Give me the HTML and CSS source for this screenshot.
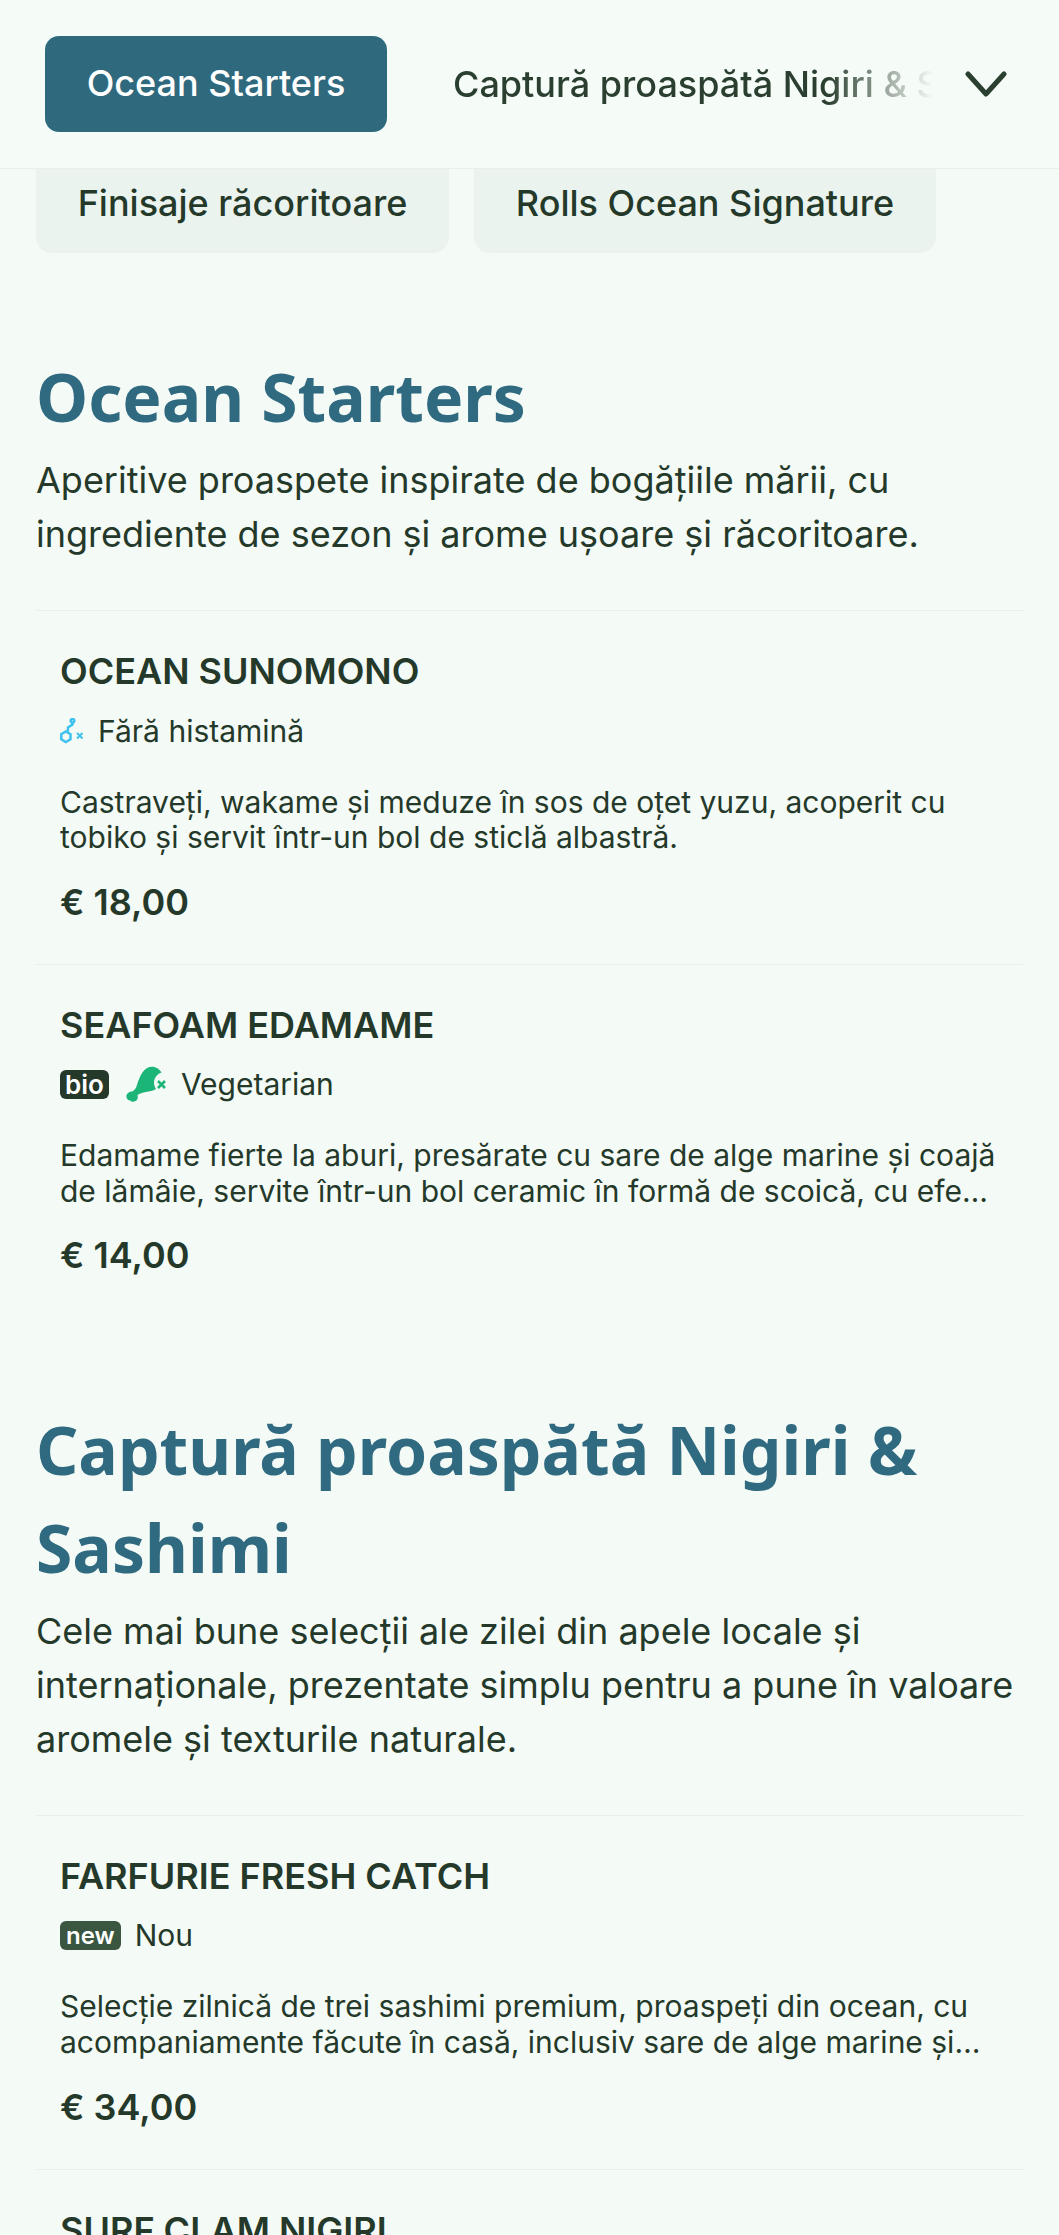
FILE: index.html
```html
<!DOCTYPE html>
<html lang="ro">
<head>
<meta charset="utf-8">
<title>Meniu</title>
<link rel="stylesheet" href="styles.css">
</head>
<body>
<header class="topbar">
  <a class="tab tab-active">Ocean Starters</a>
  <div class="tab-scroll"><a class="tab">Captură proaspătă Nigiri &amp; Sashimi</a></div>
  <svg class="chevron" viewBox="0 0 42 26" aria-hidden="true"><path d="M3 3 L21 23 L39 3" fill="none" stroke="#2b3f30" stroke-width="5" stroke-linecap="round" stroke-linejoin="round"/></svg>
</header>
<nav class="more-tabs">
  <a class="chip">Finisaje răcoritoare</a>
  <a class="chip">Rolls Ocean Signature</a>
</nav>
<main>
  <section class="category">
    <h2>Ocean Starters</h2>
    <p class="lead">Aperitive proaspete inspirate de bogățiile mării, cu ingrediente de sezon și arome ușoare și răcoritoare.</p>
    <article class="item">
      <h3>OCEAN SUNOMONO</h3>
      <div class="tags">
        <svg class="ico-hist" viewBox="0 0 24 26" aria-hidden="true"><g fill="none" stroke="#3fc2ee" stroke-width="2.500"><path d="M5.800 13.500 L10.500 16.200 V21.300 L5.800 24 L1.300 21.300 V16.200 Z"/><path d="M7.800 14 L8 9.500 L12.500 6.500 L12.500 4.800"/><circle cx="12.500" cy="2.800" r="1.800"/></g><path d="M17 15 L22.500 20.500 M22.500 15 L17 20.500" stroke="#3fc2ee" stroke-width="2" fill="none"/></svg>
        <span>Fără histamină</span>
      </div>
      <p class="desc">Castraveți, wakame și meduze în sos de oțet yuzu, acoperit cu tobiko și servit într-un bol de sticlă albastră.</p>
      <div class="price">€ 18,00</div>
    </article>
    <article class="item">
      <h3>SEAFOAM EDAMAME</h3>
      <div class="tags">
        <b class="badge badge-bio">bio</b>
        <svg class="ico-leg" viewBox="0 0 41 36" aria-hidden="true"><path d="M26 .7 C30 .7 33.500 3 35.500 6.500 C31 8 28 12 28 17 C28 19 29 21.500 30 23 C27 25 23 25.500 20 26 C16.500 26.500 13.500 27.500 11.500 29 C12 31 12 34 9.500 35 C7.500 36.200 5 36 4.500 34.500 C1.500 34.500 0 32 .5 29.500 C1 27 4 25.500 6 25.500 C8 24.500 9.500 23 10.500 20.500 C12 16 13.500 10 18 4.500 C20 2 23 .7 26 .7 Z" fill="#1cb578"/><path d="M32 15 L39 22 M39 15 L32 22" stroke="#1cb578" stroke-width="2.600" fill="none"/></svg>
        <span>Vegetarian</span>
      </div>
      <p class="desc">Edamame fierte la aburi, presărate cu sare de alge marine și coajă de lămâie, servite într-un bol ceramic în formă de scoică, cu efect de val și spumă de mare.</p>
      <div class="price">€ 14,00</div>
    </article>
  </section>
  <section class="category">
    <h2>Captură proaspătă Nigiri &amp; Sashimi</h2>
    <p class="lead">Cele mai bune selecții ale zilei din apele locale și internaționale, prezentate simplu pentru a pune în valoare aromele și texturile naturale.</p>
    <article class="item">
      <h3>FARFURIE FRESH CATCH</h3>
      <div class="tags">
        <b class="badge badge-new">new</b>
        <span>Nou</span>
      </div>
      <p class="desc">Selecție zilnică de trei sashimi premium, proaspeți din ocean, cu acompaniamente făcute în casă, inclusiv sare de alge marine și ulei de citrice presat la rece.</p>
      <div class="price">€ 34,00</div>
    </article>
    <article class="item">
      <h3>SURF CLAM NIGIRI</h3>
    </article>
  </section>
</main>
</body>
</html>
```
FILE: styles.css
```css
* { box-sizing: border-box; }
html, body { margin: 0; padding: 0; }
body {
  width: 1059px;
  height: 2235px;
  overflow: hidden;
  background: #f4faf5;
  color: #24392a;
  font-family: Inter, "Liberation Sans", sans-serif;
}
.topbar {
  position: relative;
  z-index: 2;
  height: 169px;
  display: flex;
  align-items: center;
  padding: 0 52px 0 45px;
  background: #f5fbf6;
  border-bottom: 1.5px solid #e9f0ea;
}
.tab {
  display: block;
  font-size: 36px;
  font-weight: 500;
  white-space: nowrap;
  color: #2b3f30;
}
.tab-active {
  flex: none;
  width: 342px;
  height: 96px;
  line-height: 94px;
  text-align: center;
  color: #fff;
  background: #2f697d;
  border-radius: 14px;
}
.tab-scroll {
  flex: 1;
  min-width: 0;
  margin-left: 66px;
  overflow: hidden;
  -webkit-mask-image: linear-gradient(to right, #000 0, #000 78%, transparent 100%);
  mask-image: linear-gradient(to right, #000 0, #000 78%, transparent 100%);
}
.chevron { flex: none; width: 42px; height: 26px; margin-left: 32px; }
.more-tabs {
  display: flex;
  gap: 25px;
  margin-top: -30px;
  padding: 0 36px;
}
.chip {
  display: block;
  height: 114px;
  padding-top: 30px;
  line-height: 69px;
  width: 413px;
  text-align: center;
  font-size: 36px;
  font-weight: 500;
  background: #ebf3ee;
  border-radius: 16px;
  color: #24392a;
}
.chip + .chip { width: 462px; }
.category { padding: 0 36px; margin-top: 94px; }
.category + .category { margin-top: 0; padding-top: 82.500px; }
h2 {
  margin: 0 0 8px;
  font-family: "Noto Sans", "Open Sans", sans-serif;
  font-weight: 700;
  font-size: 66px;
  line-height: 98px;
  color: #2f6a80;
}
.lead {
  margin: 0 0 49px;
  font-size: 36px;
  line-height: 54px;
  color: #24392a;
}
.item {
  padding: 38px 24px 40px;
  border-top: 1.5px solid #e9f0ea;
}
h3 {
  margin: 0;
  font-size: 36px;
  line-height: 44px;
  font-weight: 600;
  color: #24392a;
}
.tags {
  display: flex;
  align-items: center;
  gap: 14px;
  margin-top: 17.500px;
  height: 40px;
  font-size: 30px;
}
.ico-hist { width: 24px; height: 26px; }
.ico-leg { width: 41px; height: 36px; margin-left: 3px; }
.badge {
  display: block;
  color: #fff;
  font-weight: 600;
  line-height: 29px;
  height: 29px;
  border-radius: 6px;
}
.badge-bio { background: #24392a; font-size: 26px; padding: 0 5px; }
.badge-new { background: #3a5540; font-size: 24px; padding: 0 6px; }
.desc {
  margin: 34px 0 0;
  font-size: 30px;
  line-height: 35.600px;
  display: -webkit-box;
  -webkit-box-orient: vertical;
  -webkit-line-clamp: 2;
  overflow: hidden;
}
.price {
  margin-top: 24px;
  font-size: 36px;
  line-height: 44px;
  font-weight: 600;
}
```
